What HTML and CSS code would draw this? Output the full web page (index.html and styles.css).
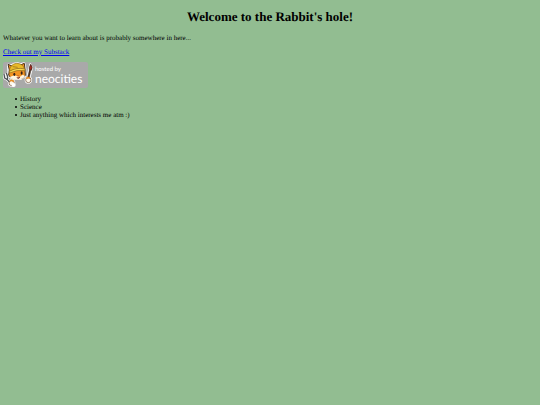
FILE: index.html
```html
<!DOCTYPE html>
<html lang="en">
<head>
    <meta charset="UTF-8">
    <meta name="viewport" content="width=device-width, initial-scale=1.0">
    <title>The Rabbit's hole</title>
    <link rel="stylesheet" href="styles.css">
</head>
<body>
    <h1>Welcome to the Rabbit's hole!</h1>
    <p>Whatever you want to learn about is probably somewhere in here...</p>
    <p><a href="#substack">Check out my Substack</a></p>

    <a class="badge" href="#neocities">
        <!-- Cat with a fork and a paintbrush -->
        <svg class="badge-cat" viewBox="0 0 90 78" aria-hidden="true">
            <!-- white sticker edge -->
            <g fill="#fff" stroke="#fff" stroke-width="6" stroke-linejoin="round">
                <path d="M15 8l10 2Q40-1 52 7l12-3 3 17-1 21-13 9H29L17 42z"/>
                <path d="M82 7l5 10-7 28-6-3z"/>
                <circle cx="26" cy="63" r="8"/>
                <circle cx="76" cy="54" r="8"/>
            </g>
            <path d="M3 36l2 12 8 5 9 10M10 33l4 11-1 9" fill="none" stroke="#fff" stroke-width="8" stroke-linejoin="round"/>
            <path d="M3 36l2 12 8 5 9 10M10 33l4 11-1 9" fill="none" stroke="#4b5154" stroke-width="4" stroke-linejoin="round"/>
            <path d="M83 7q8 9 2 18l-6-2q-1-8 4-16z" fill="#a92e22" stroke="#321d17" stroke-width="2"/>
            <path d="M79 24l5 1-5 22-5-2z" fill="#57351f" stroke="#222"/>
            <path d="M15 7l12 5q14-8 25-3l12-5 2 17 1 19q-5 9-15 10H32q-12-3-15-11l2-15z" fill="#f39322" stroke="#46301c" stroke-width="3"/>
            <path d="M19 27Q21 7 40 4q19 0 25 17-22-3-46 6z" fill="#e9ba28" stroke="#8d681d" stroke-width="2"/>
            <path d="M19 28q22-13 47-7v5q-25-4-46 7z" fill="#f9d950" stroke="#8d681d" stroke-width="2"/>
            <path d="M29 14l15 2" stroke="#8c661c" stroke-width="2"/>
            <path d="M20 45l14-5 14 5 12-7 6 5q-4 7-14 9H32q-9-2-12-7z" fill="#fff4df"/>
            <ellipse cx="34" cy="37" rx="3" ry="5" fill="#342119"/>
            <ellipse cx="56" cy="33" rx="3" ry="5" fill="#342119"/>
            <path d="M42 40l6-1-3 4z" fill="#c34e30"/>
            <path d="M40 45q7 3 12-2-1 8-7 8z" fill="#7b271b"/>
            <circle cx="76" cy="54" r="8" fill="#fff8e9" stroke="#6b4a31" stroke-width="2"/>
            <path d="M70 50q5-6 11-1" fill="none" stroke="#e58b24" stroke-width="5"/>
            <circle cx="26" cy="63" r="8" fill="#fff8e9" stroke="#6b4a31" stroke-width="2"/>
            <path d="M21 57q6-5 11 2" fill="none" stroke="#e58b24" stroke-width="5"/>
            <circle cx="32" cy="69" r="6" fill="#fff"/>
        </svg>
        <span class="badge-text">
            <span class="badge-small">hosted by</span>
            <span class="badge-name">neocities</span>
        </span>
    </a>

    <ul>
        <li>History</li>
        <li>Science</li>
        <li>Just anything which interests me atm :)</li>
    </ul>
</body>
</html>
```
FILE: styles.css
```css
body {
    margin: 9px 3px;
    background-color: #92bd91;
    color: black;
    font-family: "Liberation Serif", "Times New Roman", serif;
    font-size: 7px;
    line-height: 8px;
    text-rendering: geometricPrecision;
}
h1 {
    margin: 0 0 9px;
    font-size: 13px;
    line-height: 16px;
    text-align: center;
}
p {
    margin: 0 0 6px;
}
a {
    color: #0000ee;
}
.badge {
    display: flex;
    width: 85px;
    height: 26px;
    border-radius: 2px;
    background-color: #a9a9a9;
    color: white;
    text-decoration: none;
}
.badge-cat {
    width: 30px;
    height: 26px;
}
.badge-text {
    display: flex;
    flex-direction: column;
    padding: 4px 0 0 2px;
    font-family: Lato, "Open Sans", sans-serif;
}
.badge-small {
    font-size: 6px;
    line-height: 7px;
}
.badge-name {
    font-size: 12px;
    line-height: 11px;
}
ul {
    margin: 7px 0;
    padding-left: 12px;
    list-style: none;
}
li {
    display: flex;
    align-items: center;
    gap: 3px;
}
li::before {
    content: "";
    width: 2px;
    height: 2px;
    border-radius: 50%;
    background-color: black;
}
```
